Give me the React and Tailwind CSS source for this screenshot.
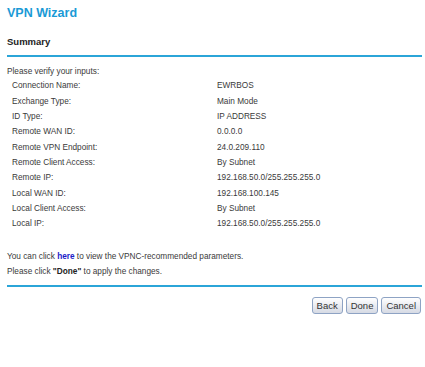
import React from 'react';

const rows = [
  ['Connection Name:', 'EWRBOS'],
  ['Exchange Type:', 'Main Mode'],
  ['ID Type:', 'IP ADDRESS'],
  ['Remote WAN ID:', '0.0.0.0'],
  ['Remote VPN Endpoint:', '24.0.209.110'],
  ['Remote Client Access:', 'By Subnet'],
  ['Remote IP:', '192.168.50.0/255.255.255.0'],
  ['Local WAN ID:', '192.168.100.145'],
  ['Local Client Access:', 'By Subnet'],
  ['Local IP:', '192.168.50.0/255.255.255.0']
];

const WizardButton = ({ children }) => (
  <button
    type="button"
    className="h-[17px] px-[4px] rounded-[3px] border border-[#8ea3c4] bg-gradient-to-b from-[#ffffff] to-[#d6dae4] text-[9.5px] leading-none text-[#333]"
  >
    {children}
  </button>
);

export default function App() {
  return (
    <div className="w-[425px] h-[367px] bg-white pl-[7px] pr-[3px] font-['Liberation_Sans',Arial,sans-serif] text-[8.25px] text-[#3a3a3a]">
      <h1 className="h-[26px] leading-[26px] text-[12.5px] font-bold text-[#1a9ad6]">VPN Wizard</h1>
      <div className="mt-[8px] h-[16px] leading-[16px] text-[9.5px] font-bold text-[#222]">Summary</div>
      <div className="mt-[5px] h-[2px] bg-[#2ba5d8]" />

      <div className="mt-[7px] leading-[15px]">Please verify your inputs:</div>
      <div className="flex flex-col">
        {rows.map(([label, value]) => (
          <div key={label} className="flex h-[15.3px] items-center">
            <span className="w-[210px] pl-[5px]">{label}</span>
            <span>{value}</span>
          </div>
        ))}
      </div>

      <div className="mt-[17px] leading-[15px]">
        You can click <a href="#" className="font-bold text-[#1c1cc8]">here</a> to view the VPNC-recommended parameters.
      </div>
      <div className="leading-[15px]">
        Please click <span className="font-bold text-[#222]">"Done"</span> to apply the changes.
      </div>
      <div className="mt-[6px] h-[2px] bg-[#2ba5d8]" />

      <div className="mt-[10px] flex justify-end gap-[3px] pr-[1px]">
        <WizardButton>Back</WizardButton>
        <WizardButton>Done</WizardButton>
        <WizardButton>Cancel</WizardButton>
      </div>
    </div>
  );
}
